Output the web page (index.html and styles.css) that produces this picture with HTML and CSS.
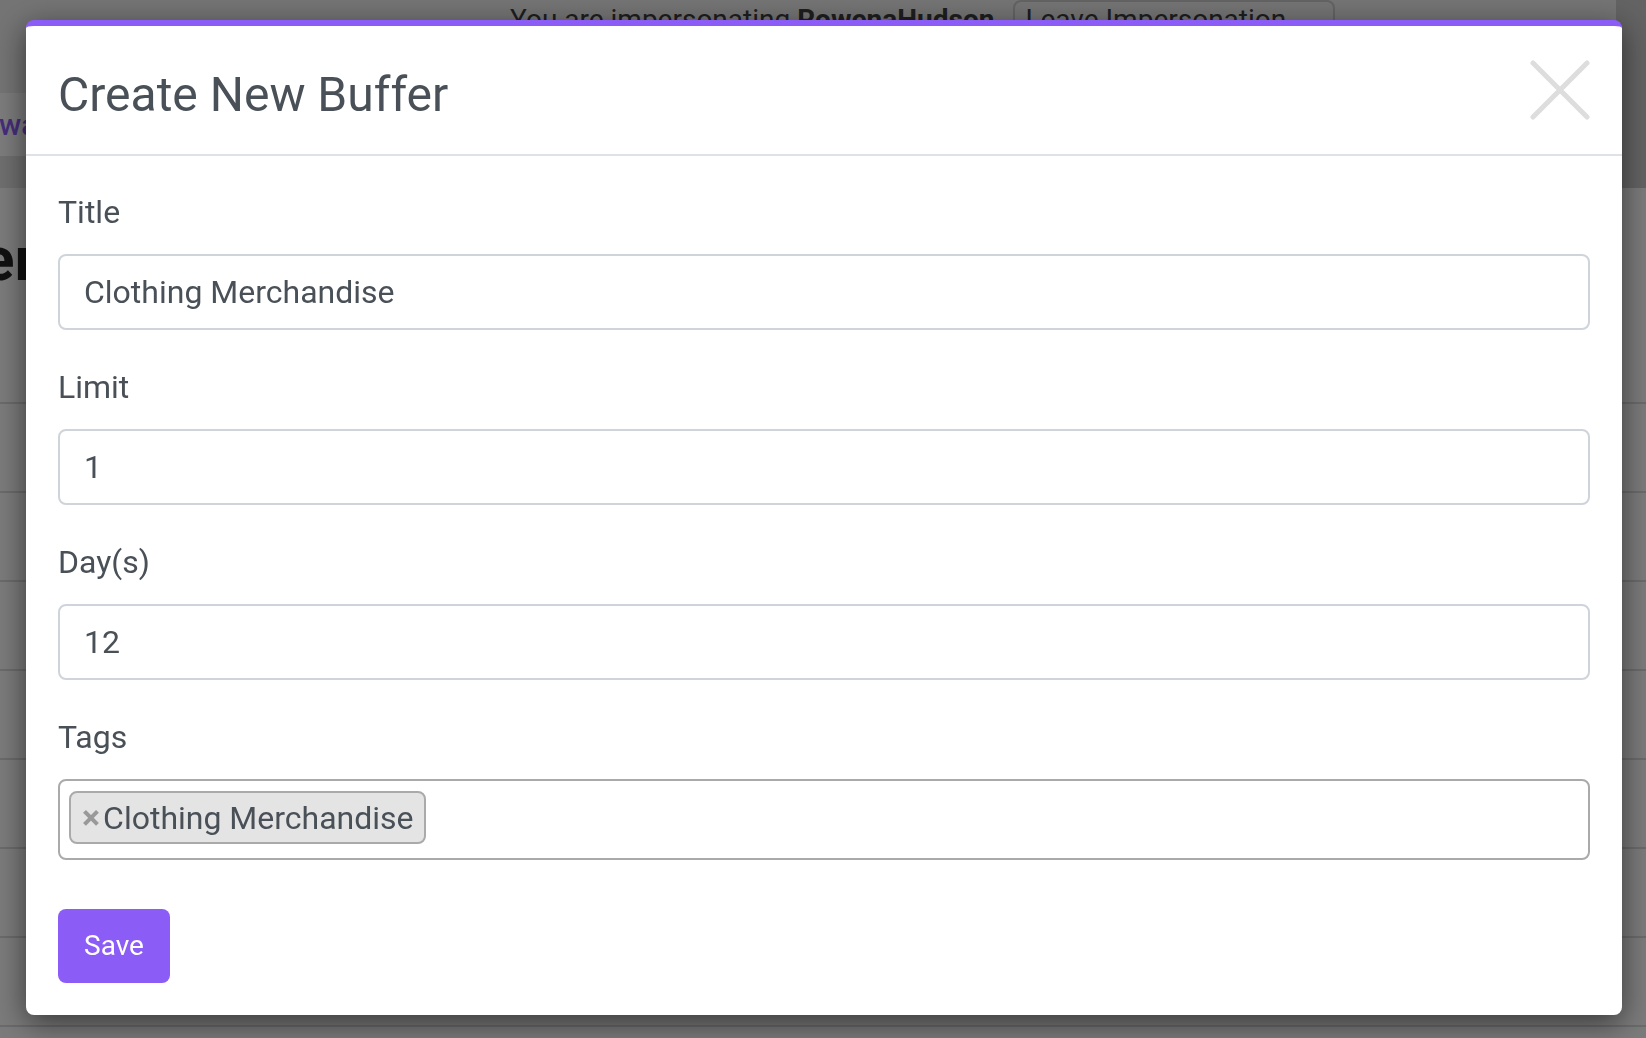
FILE: index.html
```html
<!DOCTYPE html>
<html lang="en">
<head>
<meta charset="utf-8">
<title>Create New Buffer</title>
<link rel="stylesheet" href="styles.css">
</head>
<body>
<div class="page">
  <div class="top-area">
    <div class="top-main">
      <div class="impersonation-bar">
        <span class="imp-text">You are impersonating <strong>RowenaHudson</strong></span>
        <a class="imp-leave">Leave Impersonation →</a>
      </div>
      <nav class="navbar"><a class="nav-link">wa</a></nav>
      <div class="subnav"></div>
    </div>
    <div class="top-side"></div>
  </div>
  <main class="content">
    <h1 class="page-title">er</h1>
    <div class="table">
      <div class="table-row"></div>
      <div class="table-row"></div>
      <div class="table-row"></div>
      <div class="table-row"></div>
      <div class="table-row"></div>
      <div class="table-row"></div>
      <div class="table-row"></div>
      <div class="table-row"></div>
    </div>
  </main>
</div>
<div class="backdrop"></div>
<div class="modal">
  <div class="modal-content">
    <div class="modal-header">
      <h5 class="modal-title">Create New Buffer</h5>
      <button class="close" type="button" aria-label="Close">
        <svg width="60" height="60" viewBox="0 0 60 60"><path d="M3 3 L57 57 M57 3 L3 57" stroke="#dddddd" stroke-width="5" stroke-linecap="round" fill="none"/></svg>
      </button>
    </div>
    <form class="modal-body">
      <div class="form-group">
        <label class="form-label">Title</label>
        <input class="form-control" type="text" value="Clothing Merchandise">
      </div>
      <div class="form-group">
        <label class="form-label">Limit</label>
        <input class="form-control" type="text" value="1">
      </div>
      <div class="form-group">
        <label class="form-label">Day(s)</label>
        <input class="form-control" type="text" value="12">
      </div>
      <div class="form-group tags-group">
        <label class="form-label">Tags</label>
        <div class="tags-box">
          <span class="tag"><span class="tag-remove">×</span>Clothing Merchandise</span>
        </div>
      </div>
      <button class="btn-save" type="button">Save</button>
    </form>
  </div>
</div>
</body>
</html>
```

FILE: styles.css
```css
* { box-sizing: border-box; }
html, body { margin: 0; height: 100%; }
body {
  font-family: Roboto, "Liberation Sans", sans-serif;
  background: #f6f6f6;
  color: #212529;
  overflow: hidden;
}
.page { height: 1038px; overflow: hidden; }

.top-area { display: flex; }
.top-main { flex: 1; }
.top-side { width: 30px; background: #c6c6c6; }

.impersonation-bar {
  height: 93px;
  background: #e8e8e8;
  display: flex;
  align-items: flex-start;
  gap: 19px;
  padding-left: 510px;
  font-size: 28px;
  line-height: 40px;
  color: #3c3c3c;
}
.imp-text strong { font-weight: 700; }
.imp-leave {
  border: 2px solid #c6c6c6;
  border-radius: 8px;
  padding: 0 12px 0 10px;
  line-height: 36px;
  color: #3c3c3c;
}
.navbar {
  height: 63px;
  background: #f8f8f8;
  font-size: 30px;
  line-height: 63px;
}
.nav-link { color: #8b5cf6; font-weight: 500; margin-left: -1px; }
.subnav { height: 32px; background: #dedede; }
.content { padding-top: 34px; }
.page-title {
  margin: 0 0 0 -19px;
  font-size: 62px;
  line-height: 74px;
  font-weight: 700;
  color: #222;
}
.table { margin-top: 106px; }
.table-row { height: 89px; border-top: 2px solid #d6d6d6; }

.backdrop {
  position: fixed;
  inset: 0;
  background: rgba(0, 0, 0, 0.5);
}
.modal {
  position: fixed;
  top: 20px;
  left: 26px;
  width: 1596px;
}
.modal-content {
  background: #fff;
  border-top: 6px solid #8b5cf6;
  border-radius: 8px;
  box-shadow: 0 8px 30px rgba(0, 0, 0, 0.55);
}
.modal-header {
  height: 130px;
  display: flex;
  justify-content: space-between;
  align-items: flex-start;
  padding: 0 32px;
  border-bottom: 2px solid #dee2e6;
}
.modal-title {
  margin: 40px 0 0;
  font-size: 48px;
  line-height: 58px;
  font-weight: 400;
  color: #495057;
}
.close {
  margin-top: 34px;
  width: 60px;
  height: 60px;
  padding: 0;
  border: 0;
  background: none;
  display: block;
}
.close svg { display: block; }
.modal-body { padding: 33px 32px 32px; margin: 0; }
.form-group { margin-bottom: 34px; }
.tags-group { margin-bottom: 49px; }
.form-label {
  display: block;
  font-size: 32px;
  line-height: 46px;
  margin-bottom: 19px;
  color: #495057;
}
.form-control {
  display: block;
  width: 100%;
  height: 76px;
  padding: 12px 24px;
  border: 2px solid #ced4da;
  border-radius: 8px;
  font-family: Roboto, "Liberation Sans", sans-serif;
  font-size: 32px;
  line-height: 48px;
  color: #495057;
  background: #fff;
  outline: none;
}
.tags-box {
  border: 2px solid #aaaaaa;
  border-radius: 8px;
  padding: 10px 9px 14px;
  display: flex;
  height: 81px;
}
.tag {
  display: inline-flex;
  align-items: baseline;
  height: 53px;
  background: #e4e4e4;
  border: 2px solid #aaaaaa;
  border-radius: 8px;
  padding: 2px 10px 0 11px;
  font-size: 32px;
  line-height: 45px;
  color: #495057;
}
.tag-remove {
  color: #999;
  font-weight: 700;
  font-size: 34px;
  margin-right: 3px;
}
.btn-save {
  display: block;
  height: 74px;
  padding: 0 26px;
  border: 0;
  border-radius: 8px;
  background: #8b5cf6;
  color: #fff;
  font-family: Roboto, "Liberation Sans", sans-serif;
  font-size: 28px;
  line-height: 42px;
}
```
